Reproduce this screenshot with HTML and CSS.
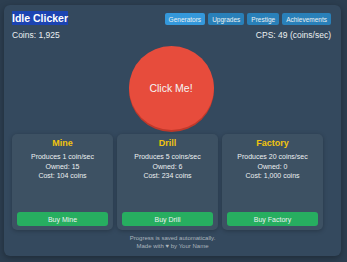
FILE: index.html
```html
<!DOCTYPE html>
<html lang="en">
<head>
    <meta charset="UTF-8">
    <meta name="viewport" content="width=device-width, initial-scale=1.0">
    <title>Idle Clicker</title>
    <link rel="stylesheet" href="styles.css">
</head>
<body>
    <div class="container">
        <div class="header">
            <div class="header-left">
                <h1><span class="title-sel">Idle Clicker</span></h1>
                <div class="stat">Coins: <span id="coins">1,925</span></div>
            </div>
            <div class="header-right">
                <div class="tabs">
                    <button class="tab active">Generators</button>
                    <button class="tab">Upgrades</button>
                    <button class="tab">Prestige</button>
                    <button class="tab">Achievements</button>
                </div>
                <div class="stat">CPS: <span id="cps">49</span> (coins/sec)</div>
            </div>
        </div>

        <div class="click-area">
            <button class="click-btn">Click Me!</button>
        </div>

        <div class="generators">
            <div class="card">
                <h2>Mine</h2>
                <p>Produces 1 coin/sec</p>
                <p>Owned: 15</p>
                <p>Cost: 104 coins</p>
                <button class="buy-btn">Buy Mine</button>
            </div>
            <div class="card">
                <h2>Drill</h2>
                <p>Produces 5 coins/sec</p>
                <p>Owned: 6</p>
                <p>Cost: 234 coins</p>
                <button class="buy-btn">Buy Drill</button>
            </div>
            <div class="card">
                <h2>Factory</h2>
                <p>Produces 20 coins/sec</p>
                <p>Owned: 0</p>
                <p>Cost: 1,000 coins</p>
                <button class="buy-btn">Buy Factory</button>
            </div>
        </div>

        <div class="footer">
            <div>Progress is saved automatically.</div>
            <div>Made with &hearts; by Your Name</div>
        </div>
    </div>
</body>
</html>
```

FILE: styles.css
```css
body {
    font-family: "Liberation Sans", Arial, sans-serif;
    background-color: #2c3e50;
    color: #ecf0f1;
    margin: 0;
    padding: 5px 6px 6px 4px;
    height: 262px;
    box-sizing: border-box;
}

.container {
    background-color: #34495e;
    border-radius: 6px;
    box-shadow: 0 2px 6px rgba(0, 0, 0, 0.3);
    padding: 8px 8px 0 8px;
    height: 251px;
    box-sizing: border-box;
}

.header {
    display: flex;
    justify-content: space-between;
}

h1 {
    font-size: 10.5px;
    margin: 0;
    line-height: 11px;
    height: 12px;
}

.title-sel {
    background-color: #1c44b2;
    color: #ffffff;
    padding: 1px 0;
}

.stat {
    font-size: 8.5px;
    margin-top: 5px;
    line-height: 10px;
}

.header-right {
    display: flex;
    flex-direction: column;
    align-items: flex-end;
    padding-right: 2px;
}

.tabs {
    display: flex;
    gap: 3px;
}

.tab {
    background-color: #2980b9;
    color: #ecf0f1;
    border: none;
    border-radius: 2px;
    font-family: inherit;
    font-size: 6.5px;
    height: 12px;
    padding: 0 4px;
    cursor: pointer;
}

.tab.active {
    background-color: #3498db;
}

.click-area {
    display: flex;
    justify-content: center;
    margin-top: 6px;
    padding-right: 3px;
}

.click-btn {
    width: 85px;
    height: 84px;
    border-radius: 50%;
    border: none;
    background-color: #e74c3c;
    box-shadow: 0 2px 0 #c0392b;
    color: #f5f5f5;
    font-family: inherit;
    font-size: 10.5px;
    cursor: pointer;
}

.generators {
    display: flex;
    gap: 4px;
    margin-top: 4px;
}

.card {
    width: 101px;
    height: 96px;
    box-sizing: border-box;
    background-color: #3d5163;
    border-radius: 5px;
    box-shadow: 0 1px 4px rgba(0, 0, 0, 0.25);
    padding: 4px 4px 0 4px;
    text-align: center;
    display: flex;
    flex-direction: column;
}

.card h2 {
    font-size: 9px;
    color: #f1c40f;
    margin: 0 0 3px 0;
    line-height: 11px;
}

.card p {
    font-size: 7px;
    margin: 0;
    line-height: 9.5px;
    color: #ecf0f1;
}

.buy-btn {
    margin: auto 1px 4px 1px;
    background-color: #27ae60;
    color: #ecf0f1;
    border: none;
    border-radius: 3px;
    height: 14px;
    font-family: inherit;
    font-size: 7px;
    cursor: pointer;
}

.footer {
    text-align: center;
    font-size: 6px;
    line-height: 8px;
    color: #aab4bd;
    margin-top: 4px;
}
```
